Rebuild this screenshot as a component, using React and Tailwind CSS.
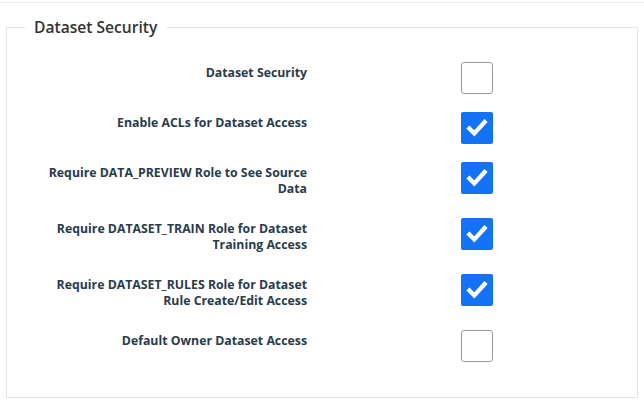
const settings = [
  { label: 'Dataset Security', checked: false },
  { label: 'Enable ACLs for Dataset Access', checked: true },
  { label: 'Require DATA_PREVIEW Role to See Source Data', checked: true },
  { label: 'Require DATASET_TRAIN Role for Dataset Training Access', checked: true },
  { label: 'Require DATASET_RULES Role for Dataset Rule Create/Edit Access', checked: true },
  { label: 'Default Owner Dataset Access', checked: false },
];

const Box = ({ checked }) =>
  checked ? (
    <div className="w-8 h-8 rounded-[2px] bg-[#1473f5] flex items-center justify-center">
      <svg viewBox="0 0 24 24" className="w-[26px] h-[26px]" fill="none" stroke="white" strokeWidth="4" strokeLinecap="square">
        <path d="M5 12.5l4.5 4.5L19 6.5" />
      </svg>
    </div>
  ) : (
    <div className="w-8 h-8 rounded-[3px] border-[1.5px] border-[#9a9a9a] bg-white" />
  );

const App = () => {
  return (
    <div className="w-[644px] h-[403px] bg-white pt-[2px] font-['Open_Sans',sans-serif]">
      <div className="border-t border-[#eeeeee]">
        <fieldset className="mx-[6px] mt-[13px] h-[382px] border border-[#e4e4e4] pl-[32px] pr-[18px] pt-[24px]">
          <legend className="-ml-[14px] px-[9px] text-[15.6px] font-semibold text-[#333] leading-[22px]">
            Dataset Security
          </legend>
          <div className="flex flex-col gap-[18px]">
            {settings.map((s) => (
              <div key={s.label} className="flex items-start">
                <div className="w-[268px] text-right py-[3px] text-[12.3px] leading-4 font-bold text-[#293b4c]">
                  {s.label}
                </div>
                <div className="ml-[154px]">
                  <Box checked={s.checked} />
                </div>
              </div>
            ))}
          </div>
        </fieldset>
      </div>
    </div>
  );
};

export default App;
